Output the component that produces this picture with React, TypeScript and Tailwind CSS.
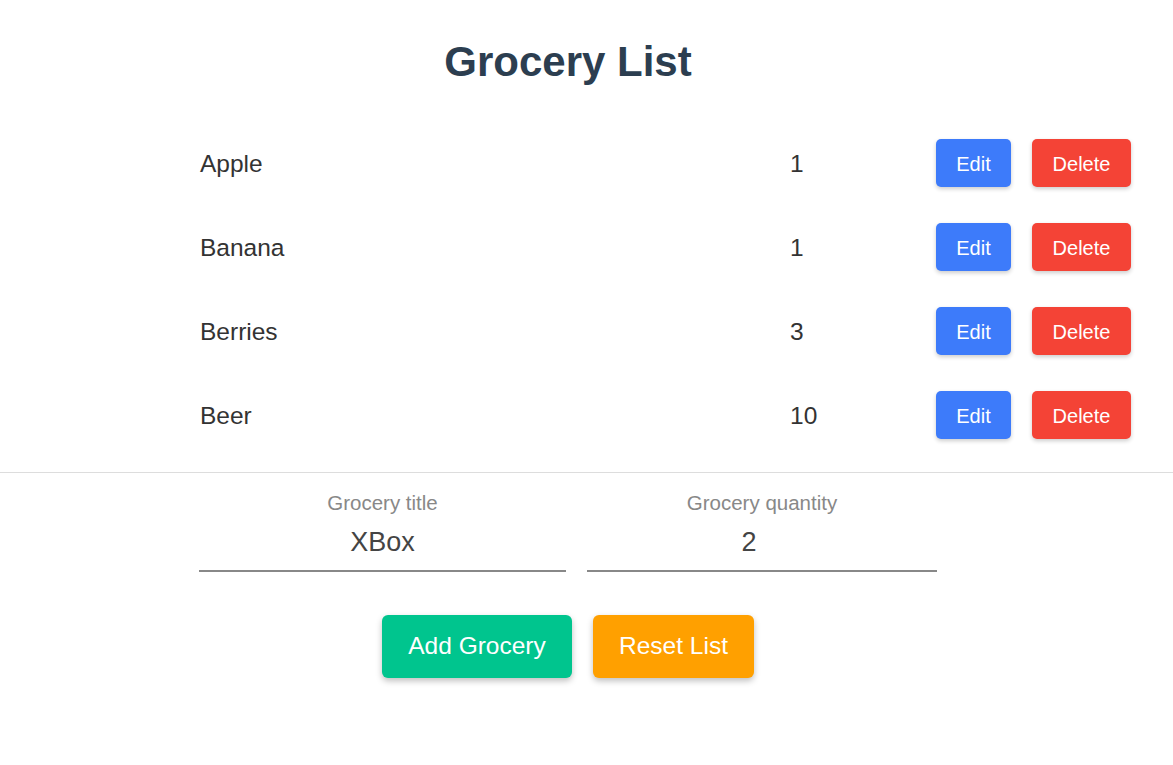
import { useState } from "react";

type Grocery = {
  title: string;
  quantity: number;
};

const initial: Grocery[] = [
  { title: "Apple", quantity: 1 },
  { title: "Banana", quantity: 1 },
  { title: "Berries", quantity: 3 },
  { title: "Beer", quantity: 10 },
];

export default function App() {
  const [items, setItems] = useState<Grocery[]>(initial);
  const [title, setTitle] = useState("XBox");
  const [quantity, setQuantity] = useState("2");

  const addGrocery = () => {
    if (!title.trim()) return;
    setItems([...items, { title, quantity: Number(quantity) || 1 }]);
  };

  const deleteGrocery = (index: number) => {
    setItems(items.filter((_, i) => i !== index));
  };

  return (
    <div className="min-h-[765px] bg-white font-['Liberation_Sans',Arial,sans-serif]">
      <div className="w-[1136px]">
        <h1 className="pt-[38px] text-center text-[42px] font-bold leading-[48px] text-[#2c3e50]">
          Grocery List
        </h1>
      </div>

      {/* list */}
      <div className="mt-[35px] pl-[200px] pr-[42px]">
        {items.map((item, index) => (
          <div
            key={`${item.title}-${index}`}
            className="flex h-[84px] items-center text-[24.5px] leading-[28px] text-[#333]"
          >
            <span className="w-[590px] pt-[2px]">{item.title}</span>
            <span className="flex-1 pt-[2px]">{item.quantity}</span>
            <div className="flex gap-[21px]">
              <button className="h-[48px] w-[75px] rounded-[5px] bg-[#3d7bfa] pt-[2px] text-[20px] text-white shadow-[0_2px_4px_rgba(0,0,0,0.2)]">
                Edit
              </button>
              <button
                className="h-[48px] w-[99px] rounded-[5px] bg-[#f44336] pt-[2px] text-[20px] text-white shadow-[0_2px_4px_rgba(0,0,0,0.2)]"
                onClick={() => deleteGrocery(index)}
              >
                Delete
              </button>
            </div>
          </div>
        ))}
      </div>

      <hr className="mt-[15px] border-t border-[#dddddd]" />

      {/* form */}
      <div className="w-[1136px]">
        <div className="mt-[18px] flex justify-center gap-[21px]">
          <label className="flex w-[367px] flex-col items-center">
            <span className="text-[20.5px] leading-[24px] text-[#888]">
              Grocery title
            </span>
            <input
              type="text"
              value={title}
              onChange={(e) => setTitle(e.target.value)}
              className="h-[57px] w-full border-b-2 border-[#888] text-center text-[27px] text-[#444] outline-none"
            />
          </label>

          <label className="flex w-[350px] flex-col items-center">
            <span className="text-[20.5px] leading-[24px] text-[#888]">
              Grocery quantity
            </span>
            <input
              type="text"
              value={quantity}
              onChange={(e) => setQuantity(e.target.value)}
              className="h-[57px] w-full border-b-2 border-[#888] pr-[26px] text-center text-[27px] text-[#444] outline-none"
            />
          </label>
        </div>

        <div className="mt-[43px] flex justify-center gap-[21px]">
          <button
            className="h-[63px] w-[190px] rounded-[6px] bg-[#00c58e] text-[24.5px] text-white shadow-[0_3px_6px_rgba(0,0,0,0.25)]"
            onClick={addGrocery}
          >
            Add Grocery
          </button>
          <button
            className="h-[63px] w-[161px] rounded-[6px] bg-[#ffa000] text-[24.5px] text-white shadow-[0_3px_6px_rgba(0,0,0,0.25)]"
            onClick={() => setItems(initial)}
          >
            Reset List
          </button>
        </div>
      </div>
    </div>
  );
}
